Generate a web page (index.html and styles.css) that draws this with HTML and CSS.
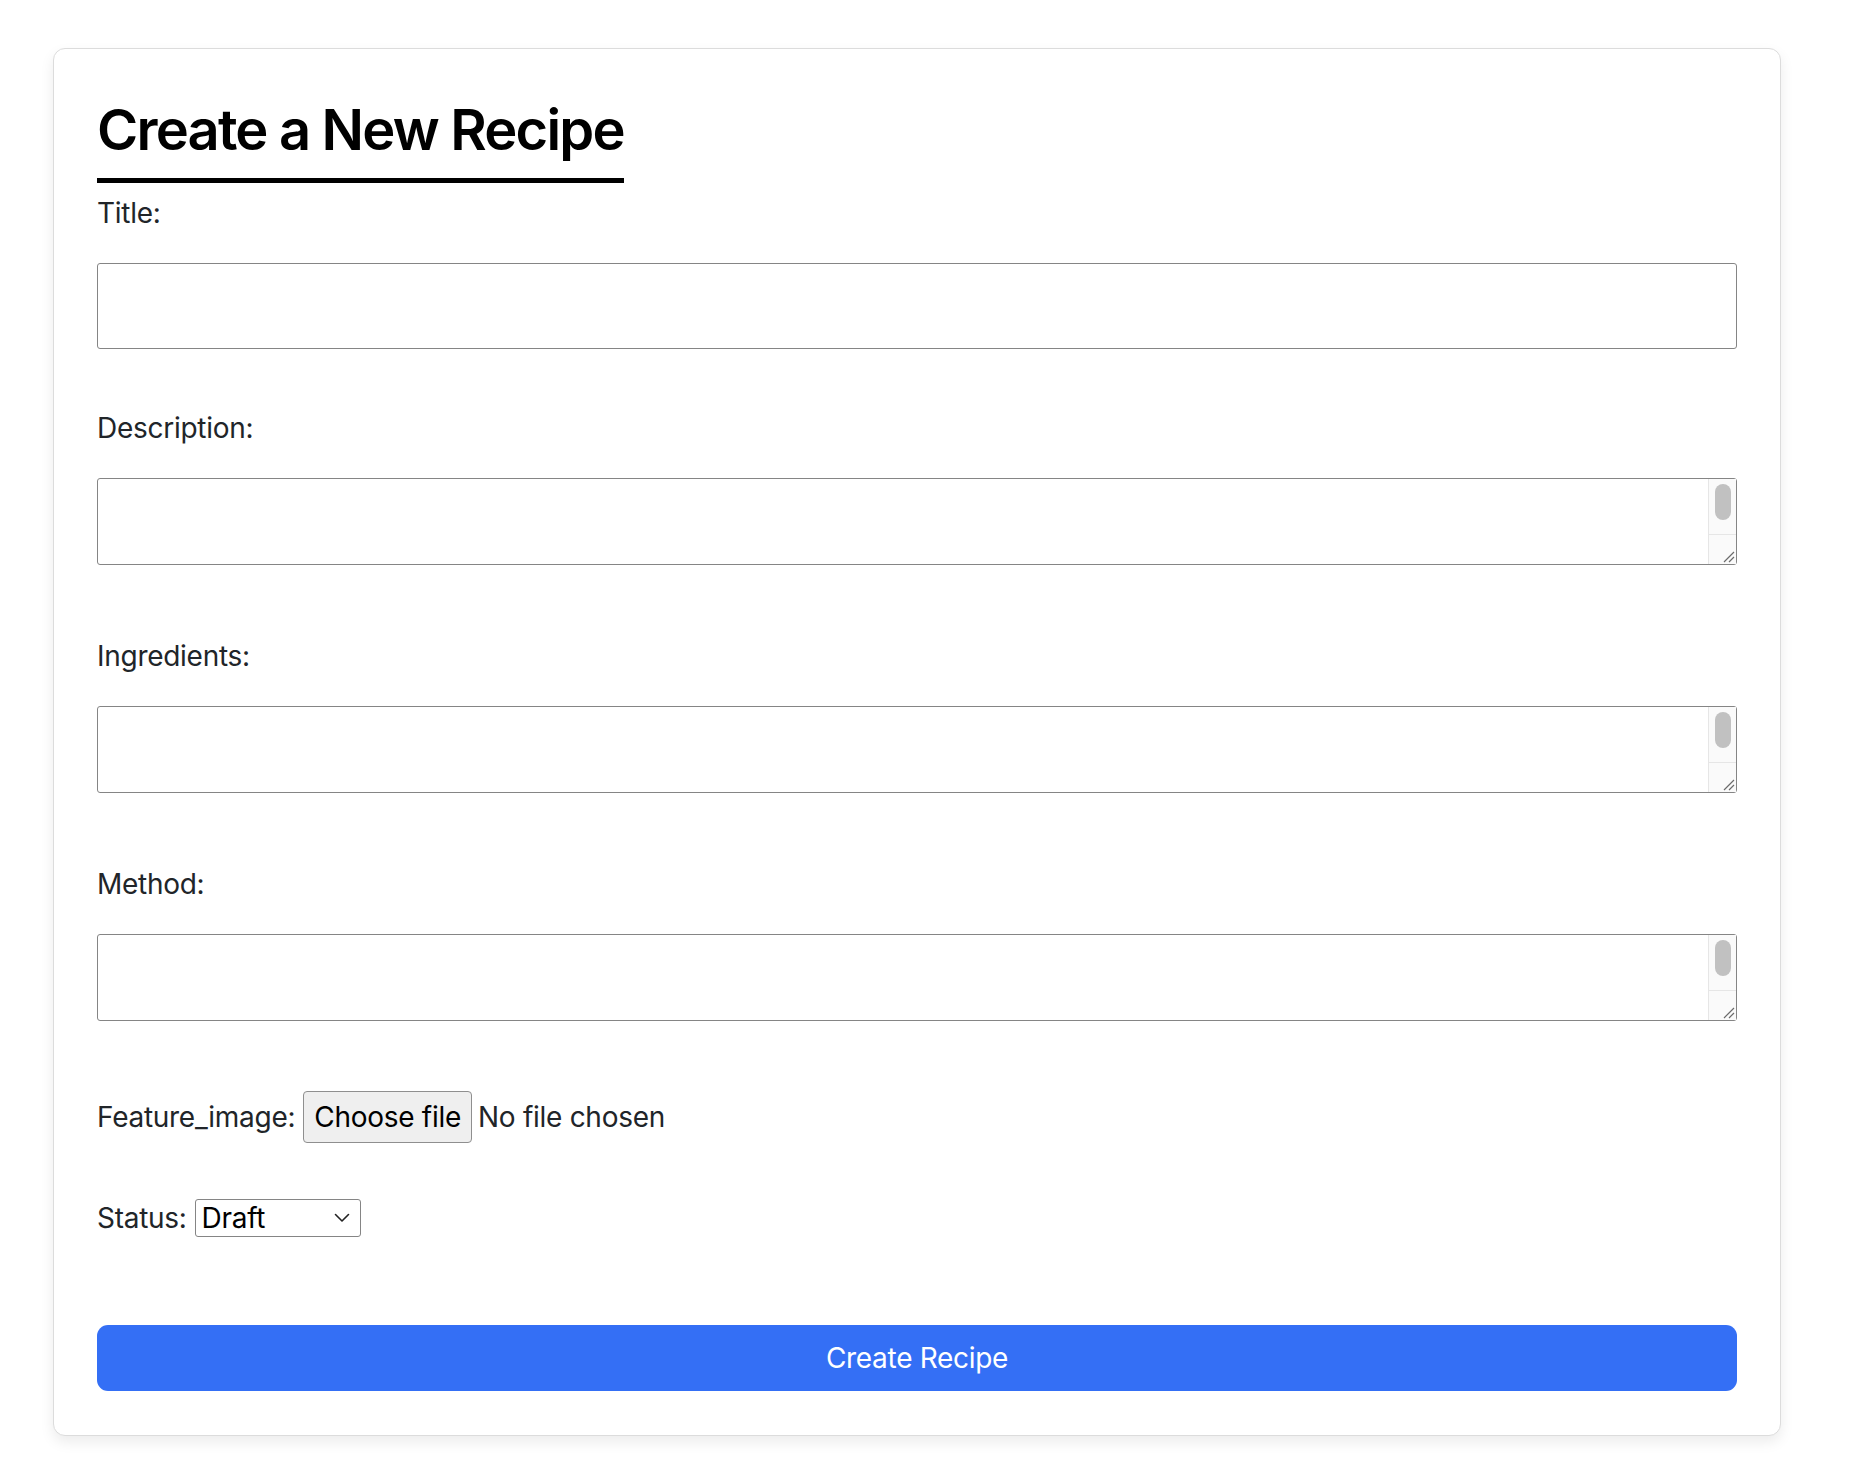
FILE: index.html
```html
<!DOCTYPE html>
<html lang="en">
<head>
<meta charset="utf-8">
<title>Create a New Recipe</title>
<link rel="stylesheet" href="styles.css">
</head>
<body>
<div class="page">
  <div class="card">
    <h1 class="heading">Create a New Recipe</h1>
    <form class="form">
      <div class="field field-input">
        <label class="label" for="title">Title:</label>
        <input class="text-input" id="title" type="text">
      </div>

      <div class="field field-area">
        <label class="label" for="description">Description:</label>
        <div class="area-wrap">
          <textarea class="area" id="description"></textarea>
          <div class="fake-scroll">
            <div class="fake-track"><div class="fake-thumb"></div></div>
            <div class="fake-resizer">
              <svg width="14" height="14" viewBox="0 0 14 14"><path d="M13 3 L3 13 M13 8 L8 13" stroke="#6b6b6b" stroke-width="1.2" fill="none"/></svg>
            </div>
          </div>
        </div>
      </div>

      <div class="field field-area">
        <label class="label" for="ingredients">Ingredients:</label>
        <div class="area-wrap">
          <textarea class="area" id="ingredients"></textarea>
          <div class="fake-scroll">
            <div class="fake-track"><div class="fake-thumb"></div></div>
            <div class="fake-resizer">
              <svg width="14" height="14" viewBox="0 0 14 14"><path d="M13 3 L3 13 M13 8 L8 13" stroke="#6b6b6b" stroke-width="1.2" fill="none"/></svg>
            </div>
          </div>
        </div>
      </div>

      <div class="field field-area field-last">
        <label class="label" for="method">Method:</label>
        <div class="area-wrap">
          <textarea class="area" id="method"></textarea>
          <div class="fake-scroll">
            <div class="fake-track"><div class="fake-thumb"></div></div>
            <div class="fake-resizer">
              <svg width="14" height="14" viewBox="0 0 14 14"><path d="M13 3 L3 13 M13 8 L8 13" stroke="#6b6b6b" stroke-width="1.2" fill="none"/></svg>
            </div>
          </div>
        </div>
      </div>

      <div class="inline-field file-row">
        <span class="label-inline">Feature_image:</span>
        <span class="file-btn">Choose file</span>
        <span class="file-text">No file chosen</span>
      </div>

      <div class="inline-field status-row">
        <span class="label-inline">Status:</span>
        <div class="select">
          <span class="select-value">Draft</span>
          <svg class="chevron" width="16" height="10" viewBox="0 0 16 10"><path d="M1.5 1.5 L8 8 L14.5 1.5" stroke="#222" stroke-width="1.6" fill="none" stroke-linecap="round" stroke-linejoin="round"/></svg>
        </div>
      </div>

      <button class="submit" type="button">Create Recipe</button>
    </form>
  </div>
</div>
</body>
</html>
```

FILE: styles.css
```css
* { box-sizing: border-box; }

html, body {
  margin: 0;
  padding: 0;
  background: #ffffff;
}

body {
  font-family: Inter, "Helvetica Neue", Arial, sans-serif;
  color: #212529;
  letter-spacing: -0.28px;
}

.page {
  padding: 48px 0 46px 53px;
}

.card {
  width: 1728px;
  border: 1px solid #dcdcdc;
  border-radius: 12px;
  background: #fff;
  padding: 43px 43px 44px 43px;
  box-shadow: 0 6px 14px rgba(0, 0, 0, 0.08);
}

.heading {
  display: inline-block;
  margin: 5px 0 0 0;
  padding-bottom: 14px;
  font-size: 56px;
  line-height: 67px;
  font-weight: 600;
  color: #000;
  letter-spacing: -1.8px;
  border-bottom: 5px solid #000;
}

.form {
  display: flex;
  flex-direction: column;
  margin-top: 13px;
}

.label {
  display: block;
  font-size: 28px;
  line-height: 34px;
  margin-bottom: 33px;
}

.field-input {
  margin-bottom: 62px;
}

.field-area {
  margin-bottom: 74px;
}

.field-last {
  margin-bottom: 70px;
}

.text-input {
  display: block;
  width: 100%;
  height: 86px;
  border: 1px solid #858585;
  border-radius: 3px;
  font-size: 28px;
  font-family: inherit;
  padding: 0 6px;
}

.area-wrap {
  position: relative;
  height: 87px;
}

.area {
  display: block;
  width: 100%;
  height: 87px;
  border: 1px solid #858585;
  border-radius: 3px;
  font-size: 28px;
  font-family: inherit;
  padding: 4px 6px;
  resize: none;
  overflow: hidden;
}

.fake-scroll {
  position: absolute;
  top: 1px;
  right: 1px;
  bottom: 1px;
  width: 28px;
  display: flex;
  flex-direction: column;
  background: #fafafa;
  border-left: 1px solid #e6e6e6;
}

.fake-track {
  flex: 1;
  padding: 5px 0 0 6px;
}

.fake-thumb {
  width: 16px;
  height: 36px;
  border-radius: 8px;
  background: #c1c1c1;
}

.fake-resizer {
  height: 30px;
  border-top: 1px solid #e6e6e6;
  display: flex;
  align-items: flex-end;
  justify-content: flex-end;
  padding: 0 1px 1px 0;
}

.inline-field {
  display: flex;
  align-items: center;
  font-size: 28px;
  line-height: 34px;
}

.file-row {
  height: 52px;
  margin-bottom: 56px;
}

.file-btn {
  margin-left: 8px;
  height: 52px;
  padding: 0 10px;
  display: flex;
  align-items: center;
  background: #efefef;
  border: 1px solid #8f8f8f;
  border-radius: 4px;
  color: #000;
}

.file-text {
  margin-left: 6px;
}

.status-row {
  height: 38px;
  margin-bottom: 88px;
}

.select {
  margin-left: 8px;
  width: 166px;
  height: 38px;
  border: 1px solid #858585;
  border-radius: 3px;
  display: flex;
  align-items: center;
  justify-content: space-between;
  padding: 0 10px 0 6px;
  color: #000;
}

.submit {
  display: block;
  width: 100%;
  height: 66px;
  border: none;
  border-radius: 11px;
  background: #346ff5;
  color: #fff;
  font-family: inherit;
  font-size: 28px;
  letter-spacing: -0.3px;
  cursor: pointer;
}
```
